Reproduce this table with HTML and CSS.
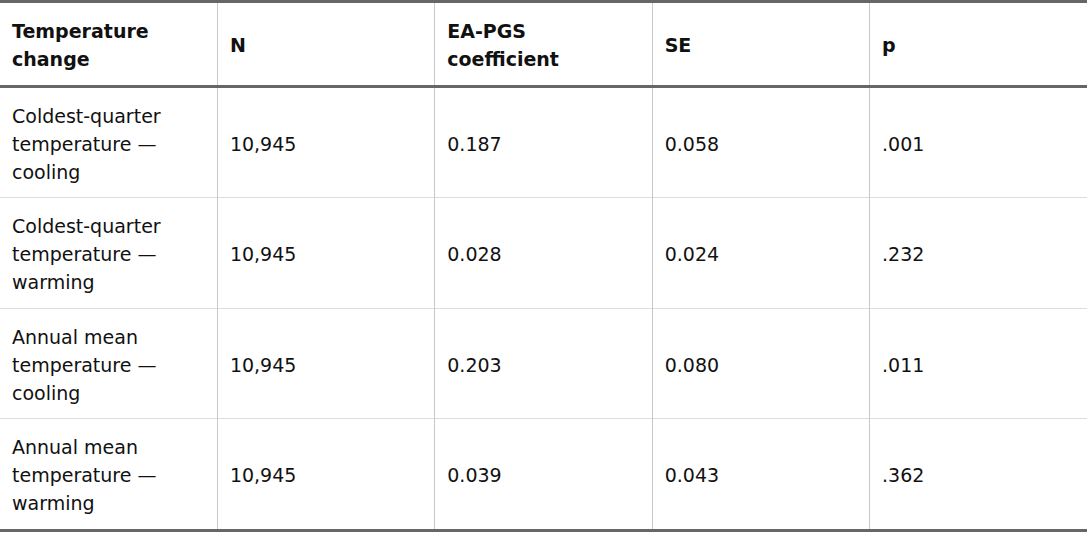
FILE: index.html
```html
<!DOCTYPE html>
<html>
<head>
<meta charset="utf-8">
<link rel="stylesheet" href="styles.css">
</head>
<body>
<table class="data">
<thead>
<tr><th>Temperature change</th><th>N</th><th>EA-PGS coefficient</th><th>SE</th><th>p</th></tr>
</thead>
<tbody>
<tr><td>Coldest-quarter temperature — cooling</td><td>10,945</td><td>0.187</td><td>0.058</td><td>.001</td></tr>
<tr><td>Coldest-quarter temperature — warming</td><td>10,945</td><td>0.028</td><td>0.024</td><td>.232</td></tr>
<tr><td>Annual mean temperature — cooling</td><td>10,945</td><td>0.203</td><td>0.080</td><td>.011</td></tr>
<tr><td>Annual mean temperature — warming</td><td>10,945</td><td>0.039</td><td>0.043</td><td>.362</td></tr>
</tbody>
</table>
</body>
</html>
```
FILE: styles.css
```css
html, body { margin: 0; padding: 0; background: #fff; }
body { font-family: "DejaVu Sans", sans-serif; font-size: 19px; line-height: 28px; color: #111; }
.data { width: 100%; table-layout: fixed; border-collapse: collapse; border-top: 3px solid #666; border-bottom: 3px solid #666; }
.data th, .data td { text-align: left; vertical-align: middle; padding: 14px 12px 11.4px; border-left: 1px solid #c8c8c8; }
.data th:first-child, .data td:first-child { border-left: none; }
.data th { font-weight: bold; padding-bottom: 12px; border-bottom: 3px solid #666; }
.data tbody tr + tr td { border-top: 1px solid #ddd; }
```
